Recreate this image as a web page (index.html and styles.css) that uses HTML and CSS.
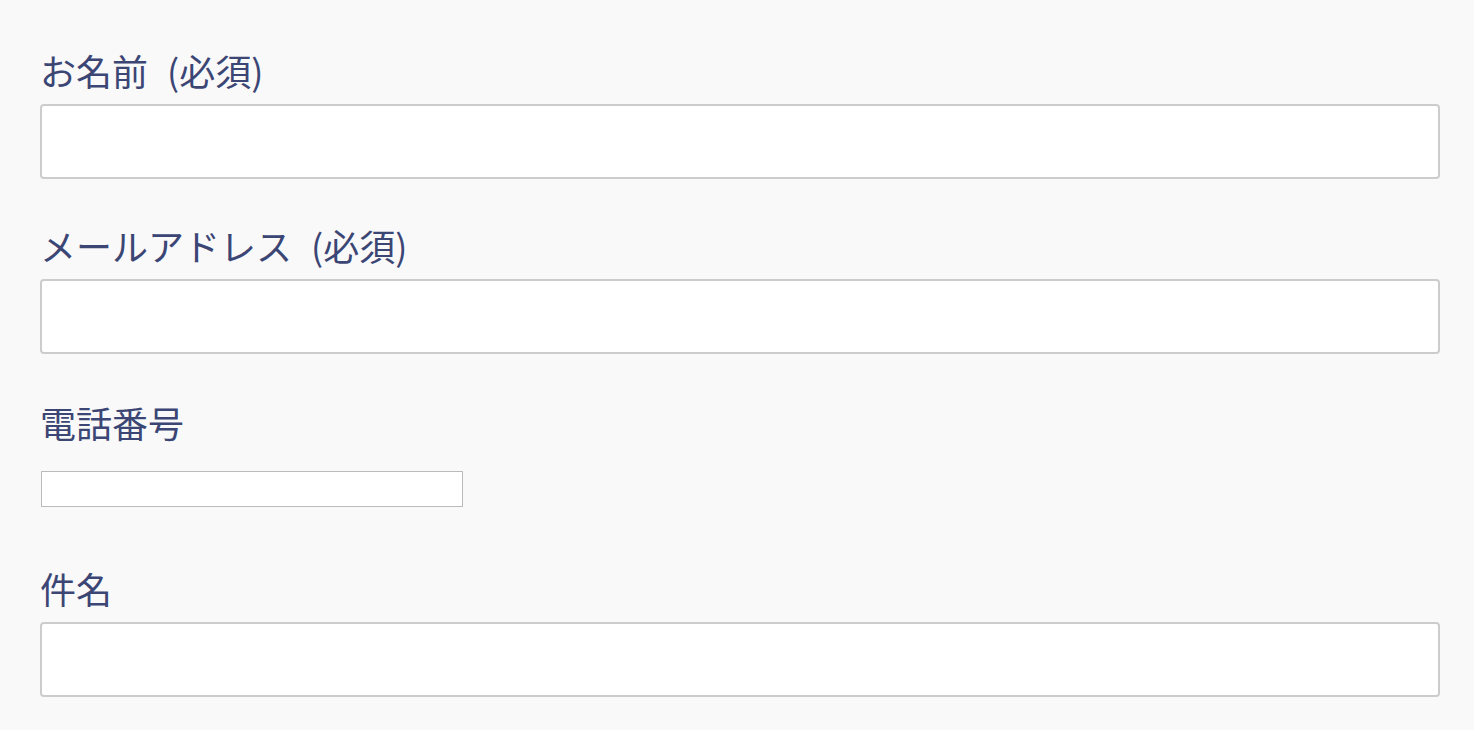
FILE: index.html
```html
<!DOCTYPE html>
<html lang="ja">
<head>
    <meta charset="UTF-8">
    <meta name="viewport" content="width=device-width, initial-scale=1.0">
    <title>お問い合わせ</title>
    <link rel="stylesheet" href="styles.css">
</head>
<body>
    <form class="contact-form">
        <div class="field">
            <label class="field-label" for="your-name">お名前 (必須)</label>
            <input class="field-input" type="text" id="your-name">
        </div>
        <div class="field field-mail">
            <label class="field-label" for="your-email">メールアドレス (必須)</label>
            <input class="field-input" type="email" id="your-email">
        </div>
        <div class="field field-tel">
            <label class="field-label" for="your-tel">電話番号</label>
            <input class="field-input" type="tel" id="your-tel">
        </div>
        <div class="field">
            <label class="field-label" for="your-subject">件名</label>
            <input class="field-input" type="text" id="your-subject">
        </div>
    </form>
</body>
</html>
```

FILE: styles.css
```css
*{
    margin: 0px;
    padding: 0px;
    box-sizing: border-box;
}
body{
    background: #f9f9f9;
    font-family: "Noto Sans CJK JP", "Noto Sans", sans-serif;
    color: #3b4675;
}
.contact-form{
    padding: 44px 34px 0 40px;
}
.field{
    margin-bottom: 40px;
}
.field-mail{
    margin-bottom: 42px;
}
.field-label{
    display: block;
    font-size: 36px;
    line-height: 52px;
    word-spacing: 11px;
    margin-bottom: 8px;
}
.field-input{
    display: block;
    width: 1400px;
    height: 75px;
    background: #fff;
    border: 2px solid #ccc;
    border-radius: 4px;
    outline: none;
}
.field-tel{
    margin-bottom: 55px;
}
.field-tel .field-label{
    margin-bottom: 23px;
}
.field-tel .field-input{
    width: 422px;
    height: 36px;
    margin-left: 1px;
    border: 1px solid #bbb;
    border-radius: 0;
}
```
